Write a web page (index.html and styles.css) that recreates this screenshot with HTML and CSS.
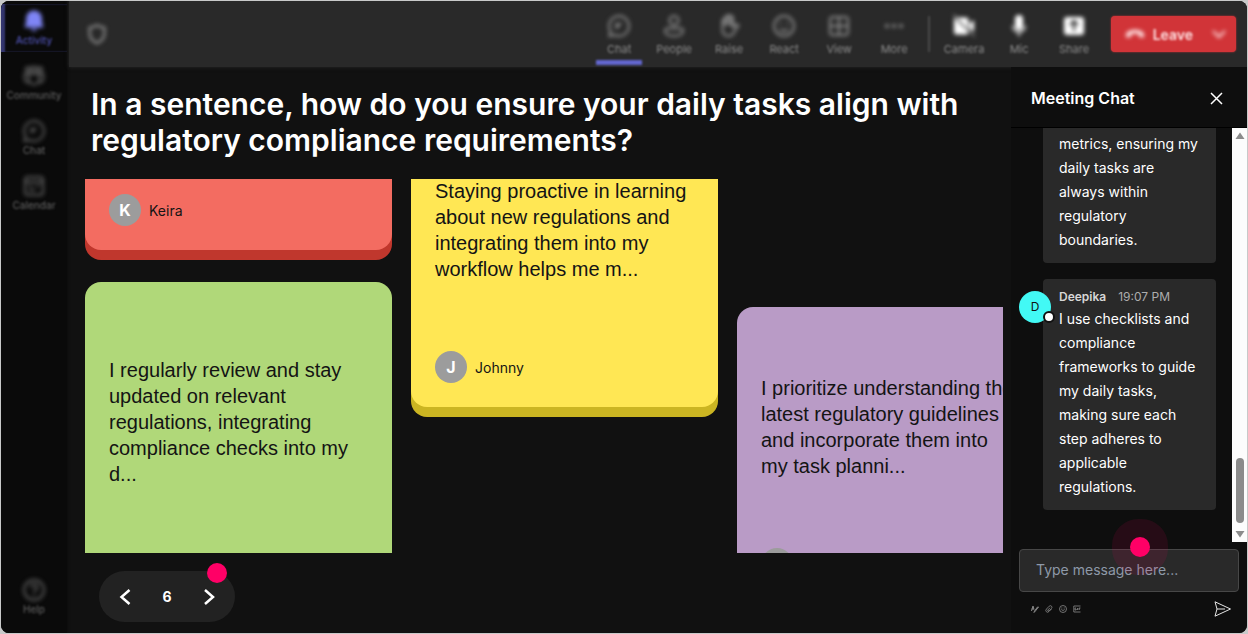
FILE: index.html
```html
<!DOCTYPE html>
<html lang="en">
<head>
<meta charset="utf-8">
<meta name="viewport" content="width=device-width, initial-scale=1">
<title>Meeting</title>
<link rel="stylesheet" href="styles.css">
</head>
<body>
<div class="app">
  <nav class="rail" aria-label="Main">
    <button class="rail-item rail-item-active" type="button">
      <svg width="24" height="24" viewBox="0 0 24 24" fill="currentColor"><path d="M12 1.500a8 8 0 0 0-8 8v4.500l-1.300 3.300a1 1 0 0 0 1 1.300h16.600a1 1 0 0 0 1-1.300L20 14V9.500a8 8 0 0 0-8-8zM8.800 19.800a3.300 3.300 0 0 0 6.400 0z"/></svg>
      <span>Activity</span>
    </button>
    <button class="rail-item" type="button">
      <svg width="24" height="24" viewBox="0 0 24 24" fill="none" stroke="currentColor" stroke-width="2"><circle cx="6" cy="5.500" r="2.200"/><circle cx="12" cy="5" r="2.600"/><circle cx="18" cy="5.500" r="2.200"/><path d="M7 10h10v5.500a5 5 0 0 1-10 0zM7 10H2.500v4.500a4 4 0 0 0 5 3.800M17 10h4.500v4.500a4 4 0 0 1-5 3.800"/></svg>
      <span>Community</span>
    </button>
    <button class="rail-item" type="button">
      <svg width="24" height="24" viewBox="0 0 24 24" fill="none" stroke="currentColor" stroke-width="2"><path d="M12 2a10 10 0 1 1-4.600 18.900L2.500 22l1-5A10 10 0 0 1 12 2zM9.500 14v-4h5M9.500 12.500h3"/></svg>
      <span>Chat</span>
    </button>
    <button class="rail-item" type="button">
      <svg width="24" height="24" viewBox="0 0 24 24" fill="none" stroke="currentColor" stroke-width="2"><rect x="3" y="3" width="18" height="18" rx="3"/><path d="M3 8h18M7 12h3M14 12h3M7 16h6"/></svg>
      <span>Calendar</span>
    </button>
    <button class="rail-item rail-help" type="button">
      <svg width="24" height="24" viewBox="0 0 24 24" fill="none" stroke="currentColor" stroke-width="2"><circle cx="12" cy="12" r="10"/><path d="M9 9.500a3 3 0 1 1 4.300 2.700q-1.300.7-1.300 2.300M12 16.500v2"/></svg>
      <span>Help</span>
    </button>
  </nav>

  <div class="stage">
    <header class="topbar">
      <svg class="soft shield" width="22" height="22" viewBox="0 0 24 24" fill="none" stroke="currentColor" stroke-width="2.500"><path d="M12 2.500q4 2.500 8 2.500v6.500q0 7-8 10.500-8-3.500-8-10.500V5q4 0 8-2.500z"/></svg>
      <div class="tools">
        <button class="tool tool-active" type="button"><svg width="24" height="24" viewBox="0 0 24 24" fill="none" stroke="currentColor" stroke-width="2"><path d="M12 2a10 10 0 1 1-4.600 18.900L2.500 22l1-5A10 10 0 0 1 12 2zM9.500 15v-5h5M9.500 12.500h3"/></svg><span>Chat</span></button>
        <button class="tool" type="button"><svg width="24" height="24" viewBox="0 0 24 24" fill="none" stroke="currentColor" stroke-width="2"><circle cx="12" cy="6.500" r="4.500"/><path d="M5 14.500h14a2 2 0 0 1 2 2q0 5.500-9 5.500t-9-5.500a2 2 0 0 1 2-2z"/></svg><span>People</span></button>
        <button class="tool" type="button"><svg width="24" height="24" viewBox="0 0 24 24" fill="none" stroke="currentColor" stroke-width="2"><path d="M5.500 13V6.500a1.500 1.500 0 0 1 2.500-1V3.500a1.500 1.500 0 0 1 2.500-1 1.500 1.500 0 0 1 3 0 1.500 1.500 0 0 1 2.500 1V13l2-2q2-1 3.500.5l-4 6q-2 4.500-5.500 4.500-6.500 0-6.500-6.500z"/><path d="M8 5v7M10.800 3v8M13.500 4v8"/></svg><span>Raise</span></button>
        <button class="tool" type="button"><svg width="24" height="24" viewBox="0 0 24 24" fill="none" stroke="currentColor" stroke-width="2"><circle cx="12" cy="12" r="10"/><path d="M8 15q4 4 8 0M8.500 8.500v2M15.500 8.500v2"/></svg><span>React</span></button>
        <button class="tool" type="button"><svg width="24" height="24" viewBox="0 0 24 24" fill="none" stroke="currentColor" stroke-width="2"><rect x="3" y="3" width="18" height="18" rx="3"/><path d="M12 3v18M3 12h18"/></svg><span>View</span></button>
        <button class="tool" type="button"><svg width="24" height="24" viewBox="0 0 24 24" fill="currentColor"><circle cx="5" cy="12" r="2"/><circle cx="12" cy="12" r="2"/><circle cx="19" cy="12" r="2"/></svg><span>More</span></button>
        <span class="tool-divider"></span>
        <button class="tool tool-bright" type="button"><svg width="24" height="24" viewBox="0 0 24 24" fill="currentColor"><path d="M3 3.500h11a2.500 2.500 0 0 1 2.500 2.500v12a2.500 2.500 0 0 1-2.500 2.500H4.500A2.500 2.500 0 0 1 2 18V4zM17.500 9.500 22 6v12l-4.500-3.500z"/><path d="m1 1 22 22" stroke="#292929" stroke-width="2"/><path d="m1.500.5 21 22" stroke="currentColor"/></svg><span>Camera</span></button>
        <button class="tool tool-bright" type="button"><svg width="24" height="24" viewBox="0 0 24 24" fill="currentColor"><rect x="8" y="1" width="8" height="15" rx="4"/><path d="M5.500 11.500a6.500 6.500 0 0 0 13 0M12 18v4.500" fill="none" stroke="currentColor" stroke-width="1.500"/></svg><span>Mic</span></button>
        <button class="tool tool-bright" type="button"><svg width="24" height="24" viewBox="0 0 24 24" fill="currentColor"><rect x="2" y="3" width="20" height="18" rx="3"/><path d="M12 17V7M8 11l4-4 4 4" fill="none" stroke="#292929" stroke-width="2"/></svg><span>Share</span></button>
      </div>
      <button class="leave" type="button">
        <svg width="20" height="20" viewBox="0 0 24 24" fill="currentColor"><path d="M12 7C6 7 1 9.500 1 13.500q0 2.500 2 3l3.500-.8q1-.4 1-1.500v-2q4.500-1.500 9 0v2q0 1.100 1 1.500l3.500.8q2-.5 2-3C23 9.500 18 7 12 7z"/></svg>
        <span>Leave</span>
        <svg class="leave-more" width="14" height="14" viewBox="0 0 14 14" fill="none" stroke="currentColor" stroke-width="2"><path d="m1 4 6 6 6-6"/></svg>
      </button>
    </header>

    <div class="content">
      <main class="main">
        <h1 class="question">In a sentence, how do you ensure your daily tasks align with regulatory compliance requirements?</h1>
        <div class="board">
          <div class="lane">
            <article class="note note-red note-cut">
              <footer class="author"><span class="avatar">K</span><span>Keira</span></footer>
            </article>
            <article class="note note-green">
              <p class="note-text note-text-tall">I regularly review and stay updated on relevant regulations, integrating compliance checks into my d...</p>
            </article>
          </div>
          <div class="lane lane-raised">
            <article class="note note-yellow">
              <p class="note-text">Staying proactive in learning about new regulations and integrating them into my workflow helps me m...</p>
              <footer class="author"><span class="avatar">J</span><span>Johnny</span></footer>
            </article>
          </div>
          <div class="lane lane-lowered">
            <article class="note note-purple">
              <p class="note-text">I prioritize understanding the latest regulatory guidelines and incorporate them into my task planni...</p>
              <footer class="author"><span class="avatar"></span></footer>
            </article>
          </div>
        </div>
        <div class="pager">
          <button class="pager-button" type="button" aria-label="Previous"><svg width="12" height="18" viewBox="0 0 12 18" fill="none" stroke="currentColor" stroke-width="2.500"><path d="m10.500 2-8 7 8 7"/></svg></button>
          <span class="pager-count">6</span>
          <button class="pager-button" type="button" aria-label="Next"><svg width="12" height="18" viewBox="0 0 12 18" fill="none" stroke="currentColor" stroke-width="2.500"><path d="m2 2 8 7-8 7"/></svg></button>
          <span class="beacon pager-beacon"></span>
        </div>
      </main>

      <aside class="chat">
        <div class="chat-head">
          <h2 class="chat-title">Meeting Chat</h2>
          <button class="plain" type="button" aria-label="Close chat"><svg width="13" height="13" viewBox="0 0 13 13" fill="none" stroke="currentColor" stroke-width="1.500"><path d="m1 1 11 11M12 1 1 12"/></svg></button>
        </div>
        <div class="chat-scroll">
          <div class="messages">
            <div class="bubble bubble-cut"><p>metrics, ensuring my daily tasks are always within regulatory boundaries.</p></div>
            <div class="bubble">
              <span class="person">D<i class="presence"></i></span>
              <div class="byline"><b>Deepika</b><time>19:07 PM</time></div>
              <p>I use checklists and compliance frameworks to guide my daily tasks, making sure each step adheres to applicable regulations.</p>
            </div>
          </div>
          <div class="track">
            <svg width="10" height="8" viewBox="0 0 10 8" fill="#8b8b8b"><path d="M5 .5 9.500 7h-9z"/></svg>
            <span class="thumb"></span>
            <svg width="10" height="8" viewBox="0 0 10 8" fill="#8b8b8b"><path d="M5 7.500.5 1h9z"/></svg>
          </div>
        </div>
        <div class="composer">
          <input class="message-input" type="text" placeholder="Type message here..." aria-label="Message">
          <span class="beacon composer-beacon"></span>
          <div class="composer-tools">
            <button class="plain" type="button" aria-label="Format"><svg width="8" height="8" viewBox="0 0 8 8" fill="none" stroke="currentColor"><path d="m.5 6 1.500-5 1 3.500M.5 4h2.500M7.500 2 4 6.500 3 7.500 3.500 6 6.500 2z"/></svg></button>
            <button class="plain" type="button" aria-label="Attach"><svg width="8" height="8" viewBox="0 0 8 8" fill="none" stroke="currentColor" stroke-width=".8"><path d="M6.500 4 4 6.500Q2.500 8 1.300 6.700T1.500 4l2.700-2.800q1.300-1 2.300 0t0 2.300L3.800 6Q2.500 6.500 2.800 5l2.200-2.200"/></svg></button>
            <button class="plain" type="button" aria-label="Emoji"><svg width="8" height="8" viewBox="0 0 8 8" fill="none" stroke="currentColor" stroke-width=".8"><circle cx="4" cy="4" r="3.500"/><path d="M2.300 4.500q1.700 2 3.400 0M2.800 2.500v1M5.200 2.500v1"/></svg></button>
            <button class="plain" type="button" aria-label="GIF"><svg width="8" height="8" viewBox="0 0 8 8" fill="none" stroke="currentColor" stroke-width=".8"><path d="M7.500 1H.8v6h6.700M3 3H2v2h1.200V4M4.500 3v2M6 5V3h1.500M6 4h1"/></svg></button>
            <button class="plain send" type="button" aria-label="Send"><svg width="18" height="16" viewBox="0 0 18 16" fill="none" stroke="currentColor"><path d="M1 .8 16.500 8 1 15.200 3 8zM3 8h8"/></svg></button>
          </div>
        </div>
      </aside>
    </div>
  </div>
</div>
</body>
</html>
```
FILE: styles.css
```css
* { box-sizing: border-box; }

body {
  margin: 0;
  background: #c8c9c9;
  color: #fff;
  font-family: Inter, "Liberation Sans", sans-serif;
}

h1, h2, p { margin: 0; }

button {
  padding: 0;
  border: 0;
  background: none;
  color: inherit;
  font: inherit;
}

svg { display: block; flex: none; }

.app {
  display: flex;
  height: calc(100vh - 2px);
  margin: 1px;
  border-radius: 8px;
  overflow: hidden;
  background: #111;
}

/* Navigation rail */
.rail {
  display: flex;
  flex-direction: column;
  gap: 7px;
  width: 66px;
  flex: none;
  padding: 3px 0 12px;
  background: #0a0a0a;
  box-shadow: 0 0 3px #0a0a0a;
  color: #5c5c5c;
}

.rail-item {
  display: flex;
  flex-direction: column;
  align-items: center;
  height: 48px;
  padding-top: 5px;
  font-size: 10px;
  font-weight: 500;
  line-height: 14px;
}

.rail-item-active {
  color: #4f52b2;
  box-shadow: inset 4px 0 2px #34366f;
}

.rail-item-active svg { color: #7f85f5; }
.rail-help { margin-top: auto; }

/* Out-of-focus controls around the meeting content */
.soft,
.rail-item svg,
.tool svg,
.leave svg { filter: blur(2px); }

.rail-item span,
.tool span,
.tool-divider,
.leave span { filter: blur(1px); }

/* Top bar */
.stage {
  display: flex;
  flex: 1;
  flex-direction: column;
  min-width: 0;
}

.topbar {
  display: flex;
  align-items: center;
  height: 66px;
  flex: none;
  margin-left: 2px;
  padding: 0 11px 0 17px;
  background: #292929;
  box-shadow: 0 0 4px #292929;
  color: #8c8c8c;
}

.tools {
  display: flex;
  align-items: center;
  height: 100%;
  margin-left: auto;
}

.tool {
  display: flex;
  flex-direction: column;
  align-items: center;
  gap: 3px;
  width: 55px;
  height: 100%;
  padding-top: 13px;
  font-size: 11px;
  line-height: 16px;
}

.tool-active::after {
  content: "";
  flex: none;
  width: 46px;
  height: 5px;
  background: #6367cf;
  filter: blur(1px);
}

.tool-bright svg { color: #fff; }

.tool-divider {
  width: 2px;
  height: 36px;
  margin: 0 7px 0 6px;
  background: #4a4a4a;
}

.leave {
  display: flex;
  align-items: center;
  gap: 8px;
  height: 36px;
  margin-left: 9px;
  padding: 0 10px 0 14px;
  border-radius: 4px;
  background: #d13438;
  box-shadow: 0 0 2px #d13438;
  color: #ffe3e4;
  font-size: 14px;
  font-weight: 600;
}

.leave-more { margin-left: 11px; }

/* Question board */
.content {
  display: flex;
  flex: 1;
  min-height: 0;
}

.main {
  display: flex;
  flex: 1;
  flex-direction: column;
  min-width: 0;
  padding: 19px 8px 11px 18px;
}

.question {
  padding: 0 6px;
  font-size: 30px;
  font-weight: 600;
  line-height: 36px;
}

.board {
  display: flex;
  align-items: flex-start;
  flex: 1;
  gap: 19px;
  min-height: 0;
  margin-top: 21px;
  overflow: hidden;
}

.lane {
  display: flex;
  flex: none;
  flex-direction: column;
  gap: 32px;
  width: 307px;
}

.lane-raised { margin-top: -69px; }
.lane-lowered { margin-top: 128px; }

.note {
  padding: 24px;
  border-radius: 16px;
  box-shadow: 0 10px var(--edge);
  background: var(--fill);
  color: #141414;
}

.note-cut {
  padding-top: 15px;
  border-radius: 0 0 16px 16px;
}

.note-red { --fill: #f36c61; --edge: #c0372d; }
.note-green { --fill: #b0d879; --edge: #7fa648; padding-bottom: 81px; }
.note-yellow { --fill: #ffe754; --edge: #cbb522; }
.note-purple { --fill: #b99bc6; --edge: #876a94; }

.note-text {
  display: flex;
  align-items: center;
  min-height: 192px;
  font: 20px/26px "Liberation Sans", Arial, sans-serif;
}

.note-text-tall { min-height: 232px; }

.author {
  display: flex;
  align-items: center;
  gap: 8px;
  font-size: 14px;
}

.note-text + .author { margin-top: 25px; }

.avatar {
  display: grid;
  place-items: center;
  width: 32px;
  height: 32px;
  border-radius: 50%;
  background: #9c9c9c;
  color: #fff;
  font-size: 16px;
  font-weight: 700;
}

.pager {
  position: relative;
  display: flex;
  align-items: center;
  justify-content: space-between;
  align-self: flex-start;
  width: 136px;
  height: 51px;
  margin: 18px 0 0 14px;
  padding: 0 18px;
  border-radius: 26px;
  background: #222;
}

.pager-button {
  display: grid;
  place-items: center;
  width: 16px;
  height: 32px;
}

.pager-count {
  font-size: 14px;
  font-weight: 700;
}

.beacon {
  position: absolute;
  width: 20px;
  height: 20px;
  border-radius: 50%;
  background: #ff0066;
}

.pager-beacon { top: -8px; right: 8px; }

/* Chat panel */
.chat {
  display: flex;
  flex: none;
  flex-direction: column;
  width: 236px;
  background: #0e0e0e;
}

.chat-head {
  display: flex;
  align-items: center;
  justify-content: space-between;
  height: 61px;
  padding: 2px 24px 0 20px;
  border-bottom: 1px solid #000;
}

.chat-title {
  font-size: 16px;
  font-weight: 600;
}

.chat-scroll {
  display: flex;
  flex: 1;
  min-height: 0;
}

.messages {
  display: flex;
  flex: 1;
  flex-direction: column;
  justify-content: flex-end;
  gap: 16px;
  padding: 0 16px 32px 32px;
  overflow: hidden;
}

.bubble {
  position: relative;
  padding: 8px 16px 11px;
  border-radius: 4px;
  background: #292929;
  font-size: 14px;
  line-height: 24px;
}

.bubble-cut {
  padding-top: 4px;
  border-radius: 0 0 4px 4px;
}

.byline {
  display: flex;
  gap: 12px;
  color: #d6d6d6;
  font-size: 12px;
  line-height: 20px;
}

.byline b { font-weight: 600; }
.byline time { color: #adadad; }

.person {
  position: absolute;
  top: 12px;
  left: -24px;
  display: grid;
  place-items: center;
  width: 32px;
  height: 32px;
  border-radius: 50%;
  background: #42f9f5;
  color: #111;
  font-size: 12px;
}

.presence {
  position: absolute;
  right: -4px;
  bottom: 0;
  width: 12px;
  height: 12px;
  border: 2px solid #111;
  border-radius: 50%;
  background: #fff;
}

.track {
  display: flex;
  flex-direction: column;
  align-items: center;
  justify-content: space-between;
  width: 15px;
  padding: 4px 0;
  background: #fcfcfc;
}

.thumb {
  width: 8px;
  height: 65px;
  margin: auto 0 7px;
  border-radius: 4px;
  background: #8b8b8b;
}

.composer {
  position: relative;
  padding: 7px 8px 16px;
}

.message-input {
  display: block;
  width: 100%;
  height: 43px;
  padding: 0 16px 2px;
  border: 1px solid #474747;
  border-radius: 4px;
  background: #292929;
  color: #fff;
  font: 14px/20px Inter, "Liberation Sans", sans-serif;
}

.message-input::placeholder { color: #8e99a8; opacity: 1; }

.composer-beacon {
  top: -5px;
  left: 119px;
  box-shadow: 0 0 0 18px rgba(255, 0, 102, 0.1);
}

.composer-tools {
  display: flex;
  align-items: center;
  gap: 6px;
  margin-top: 9px;
  padding: 0 7px 0 12px;
  color: #8a8a8a;
}

.send {
  margin-left: auto;
  color: #e6e6e6;
}
```
